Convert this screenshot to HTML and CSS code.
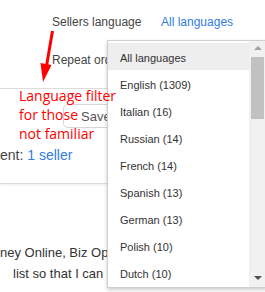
FILE: index.html
```html
<!DOCTYPE html>
<html lang="en">
<head>
    <meta charset="UTF-8">
    <meta name="viewport" content="width=device-width, initial-scale=1.0">
    <title>Sellers language</title>
    <link rel="stylesheet" href="styles.css">
</head>
<body>
    <div class="page">
        <div class="filters">
            <div class="filter-row">
                <span class="filter-label">Sellers language</span>
                <a class="filter-link" href="#">All languages</a>
            </div>
            <div class="filter-row second">
                <span class="filter-label">Repeat orders</span>
            </div>
        </div>

        <div class="card">
            <button class="save-btn">Save</button>
            <div class="card-line">ent: <a href="#">1 seller</a></div>
        </div>

        <div class="desc">
            <div>ney Online, Biz Opportunities</div>
            <div class="indent">list so that I can</div>
        </div>
    </div>

    <div class="dropdown">
        <ul class="lang-list">
            <li class="active">All languages</li>
            <li>English (1309)</li>
            <li>Italian (16)</li>
            <li>Russian (14)</li>
            <li>French (14)</li>
            <li>Spanish (13)</li>
            <li>German (13)</li>
            <li>Polish (10)</li>
            <li>Dutch (10)</li>
        </ul>
        <div class="scrollbar">
            <div class="arrow-up"></div>
            <div class="thumb"></div>
            <div class="arrow-down"></div>
        </div>
    </div>

    <!-- annotation -->
    <svg class="note-arrow" width="265" height="292" viewBox="0 0 265 292">
        <line x1="52.5" y1="31" x2="46.5" y2="66" stroke="#ff0000" stroke-width="3"/>
        <polygon points="43,82 51.5,65 40.5,63" fill="#ff0000"/>
    </svg>
    <div class="note">Language filter<br>for those<br>not familiar</div>
</body>
</html>
```

FILE: styles.css
```css
body {
    margin: 0;
    padding: 0;
    background: #ffffff;
    font-family: "Liberation Sans", Arial, sans-serif;
    color: #333;
    overflow: hidden;
    width: 265px;
    height: 292px;
    position: relative;
}

a {
    color: #2f7de1;
    text-decoration: none;
}

.filters {
    padding: 14px 0 0 52px;
    font-size: 12px;
    line-height: 16px;
}

.filter-row {
    display: flex;
    white-space: nowrap;
}

.filter-row.second {
    margin-top: 22px;
}

.filter-label {
    width: 109px;
    color: #444;
}

.card {
    margin-top: 20px;
    border-top: 1px solid #dcdcdc;
    border-bottom: 1px solid #dcdcdc;
    box-shadow: 0 1px 2px rgba(0, 0, 0, 0.08);
    padding: 15px 0 18px 0;
}

.save-btn {
    display: block;
    margin-left: 63px;
    height: 24px;
    width: 70px;
    padding: 0 0 0 17px;
    text-align: left;
    background: #fff;
    border: 1px solid #d6d6d6;
    border-radius: 5px;
    color: #555;
    font-family: "Liberation Sans", Arial, sans-serif;
    font-size: 13px;
}

.card-line {
    margin-top: 17px;
    font-size: 14px;
    line-height: 20px;
    color: #444;
    white-space: nowrap;
}

.desc {
    margin-top: 58px;
    font-size: 13px;
    line-height: 21px;
    color: #333;
    white-space: nowrap;
}

.desc .indent {
    padding-left: 13px;
}

.dropdown {
    position: absolute;
    left: 107px;
    top: 40px;
    width: 158px;
    height: 246px;
    display: flex;
    background: #fff;
    border: 1px solid #cfcfcf;
    box-shadow: 0 2px 4px rgba(0, 0, 0, 0.2);
}

.lang-list {
    list-style: none;
    margin: 0;
    padding: 2px 0 0 0;
    flex: 1;
    font-size: 11px;
}

.lang-list li {
    height: 27px;
    box-sizing: border-box;
    padding: 3px 0 0 12px;
    line-height: 24px;
    color: #333;
    white-space: nowrap;
}

.lang-list li.active {
    background: #eeeeee;
}

.scrollbar {
    width: 17px;
    background: #f1f1f1;
    display: flex;
    flex-direction: column;
    align-items: center;
}

.arrow-up {
    margin-top: 5px;
    width: 0;
    height: 0;
    border-left: 4px solid transparent;
    border-right: 4px solid transparent;
    border-bottom: 4px solid #a3a3a3;
}

.thumb {
    margin-top: 7px;
    width: 13px;
    height: 62px;
    background: #c1c1c1;
}

.arrow-down {
    margin-top: auto;
    margin-bottom: 7px;
    width: 0;
    height: 0;
    border-left: 4px solid transparent;
    border-right: 4px solid transparent;
    border-top: 4px solid #505050;
}

.note-arrow {
    position: absolute;
    left: 0;
    top: 0;
}

.note {
    position: absolute;
    left: 19px;
    top: 86px;
    font-family: "Open Sans", sans-serif;
    font-size: 14px;
    line-height: 19px;
    color: #ff0000;
    white-space: nowrap;
}
```
